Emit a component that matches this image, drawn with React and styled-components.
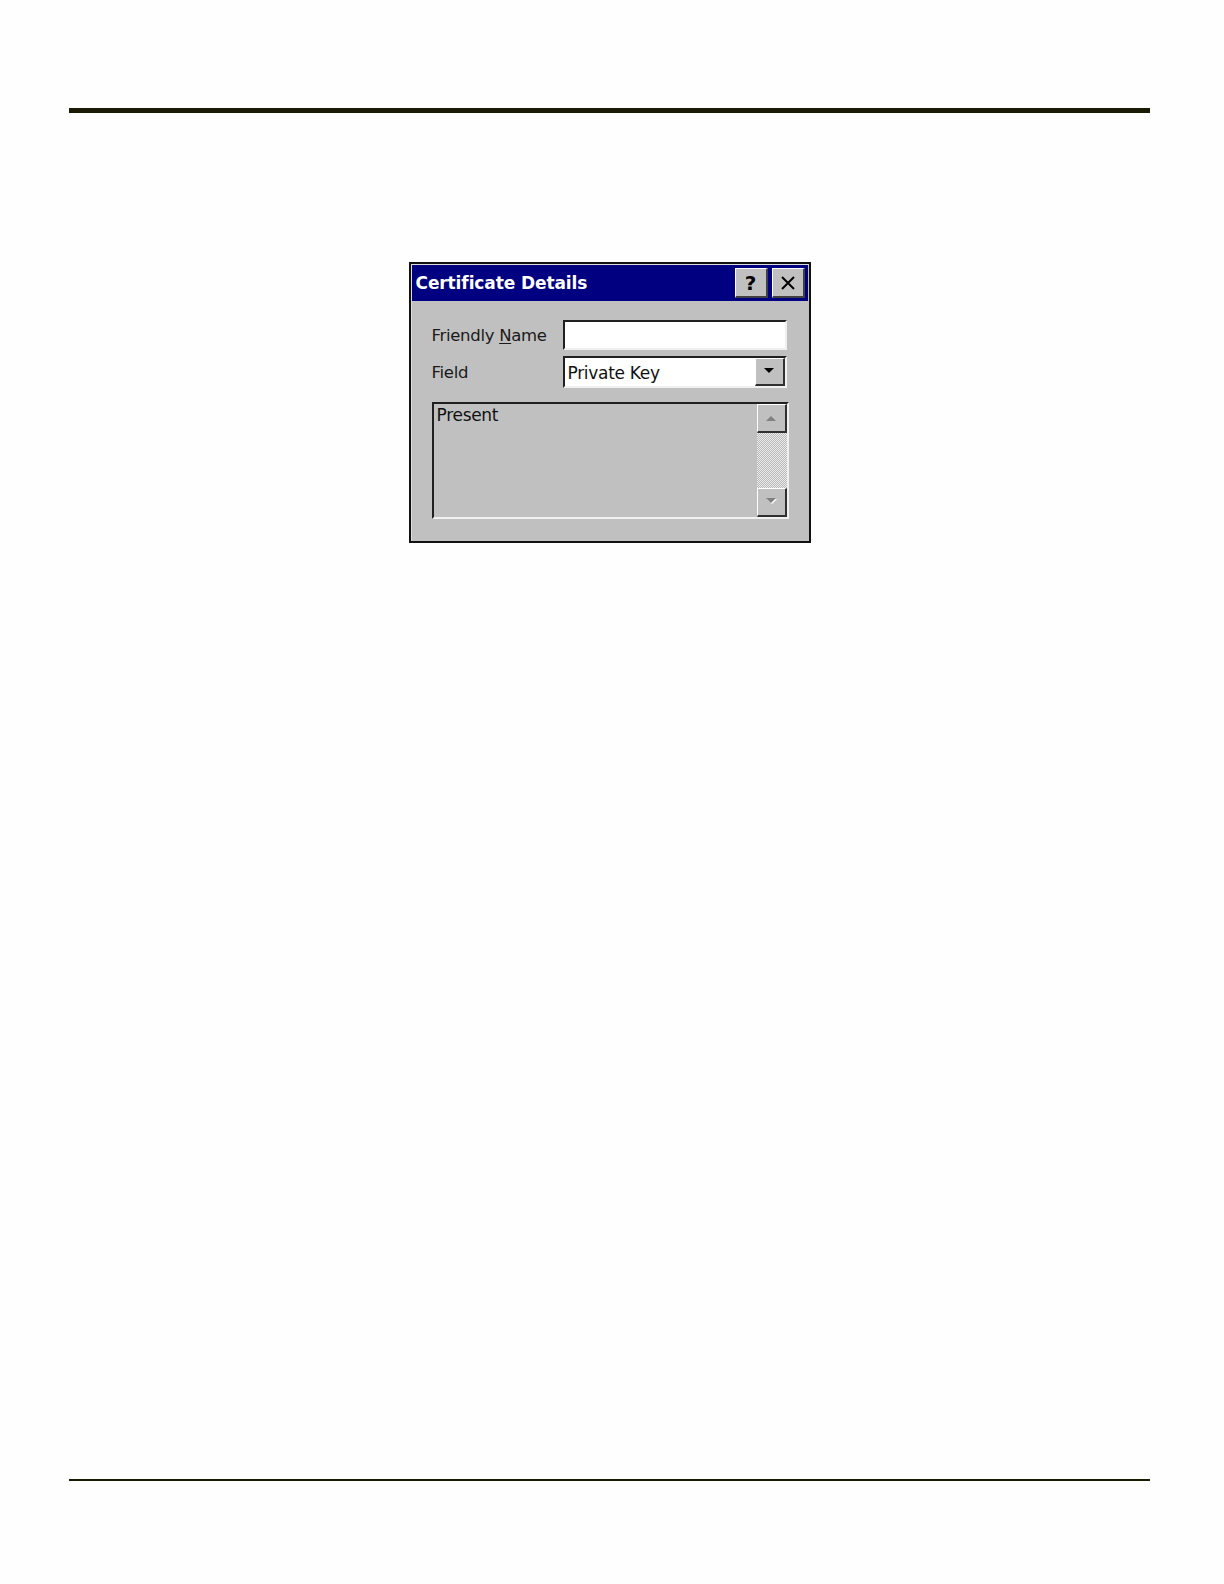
import React from 'react';
import styled, { createGlobalStyle } from 'styled-components';

const GlobalStyle = createGlobalStyle`
  html, body {
    margin: 0;
    padding: 0;
    background: #fefefe;
    overflow: hidden;
  }
`;

const Page = styled.div`
  width: 1224px;
  height: 1584px;
  display: flex;
  flex-direction: column;
  align-items: flex-start;
  padding-left: 69px;
  box-sizing: border-box;
  overflow: hidden;
`;

const Rule = styled.div`
  width: 1081px;
  height: ${(p) => p.thickness}px;
  flex-shrink: 0;
  background: #1a1a05;
  margin-top: ${(p) => p.top || 0};
  margin-bottom: ${(p) => p.bottom || 0};
`;

const Stage = styled.div`
  width: 1081px;
  display: flex;
  justify-content: center;
  padding-top: 149px;
`;

const Dialog = styled.div`
  width: 402px;
  height: 281px;
  box-sizing: border-box;
  border: 2px solid #111;
  background: #c0c0c0;
  padding: 1px;
  display: flex;
  flex-direction: column;
  font-family: 'DejaVu Sans', Tahoma, sans-serif;
  box-shadow: inset 1px 1px 0 #dcdcdc;
`;

const TitleBar = styled.div`
  height: 36px;
  background: #000080;
  display: flex;
  align-items: center;
  padding: 0 3px 0 4px;
  gap: 4px;
`;

const Title = styled.div`
  flex: 1;
  color: #fff;
  font-weight: bold;
  font-size: 17px;
  letter-spacing: -0.1px;
`;

const CaptionButton = styled.div`
  width: 33px;
  height: 30px;
  box-sizing: border-box;
  background: #c0c0c0;
  border-top: 1px solid #fff;
  border-left: 1px solid #fff;
  border-right: 2px solid #404040;
  border-bottom: 2px solid #404040;
  display: flex;
  align-items: center;
  justify-content: center;
  font-weight: bold;
  font-size: 20px;
  color: #000;
`;

const Body = styled.div`
  flex: 1;
  padding: 19px 20px 0 20px;
  display: flex;
  flex-direction: column;
`;

const Row = styled.div`
  display: flex;
  align-items: center;
  height: ${(p) => p.h}px;
  margin-bottom: ${(p) => p.mb || 0}px;
`;

const Label = styled.div`
  width: 131px;
  font-size: 16.5px;
  color: #1a1a1a;
  letter-spacing: -0.3px;
  u {
    text-decoration: underline;
    text-underline-offset: 2px;
  }
`;

const Sunken = styled.div`
  box-sizing: border-box;
  width: ${(p) => p.w}px;
  height: ${(p) => p.h}px;
  background: ${(p) => p.bg};
  border-top: 2px solid #202020;
  border-left: 2px solid #202020;
  border-right: 2px solid #f0f0f0;
  border-bottom: 2px solid #f0f0f0;
  display: flex;
  align-items: stretch;
`;

const ValueText = styled.div`
  flex: 1;
  font-size: 17px;
  color: #111;
  padding: 1px 0 0 3px;
  display: flex;
  align-items: ${(p) => (p.top ? 'flex-start' : 'center')};
  letter-spacing: -0.3px;
`;

const RaisedButton = styled.div`
  box-sizing: border-box;
  width: 30px;
  height: ${(p) => p.h}px;
  background: #c0c0c0;
  border-top: 1px solid #fff;
  border-left: 1px solid #fff;
  border-right: 2px solid #303030;
  border-bottom: 2px solid #303030;
  display: flex;
  align-items: center;
  justify-content: center;
`;

const ScrollBar = styled.div`
  width: 30px;
  display: flex;
  flex-direction: column;
`;

const Track = styled.div`
  flex: 1;
  background-color: #e0e0e0;
  background-image: repeating-conic-gradient(#b8b8b8 0 25%, #ececec 0 50%);
  background-size: 2px 2px;
`;

const Arrow = ({ dir, color = '#000', emboss }) => (
  <svg width="14" height="8" viewBox="0 0 14 8">
    {emboss && (
      <path d={dir === 'up' ? 'M3 8 L8 3 L13 8 Z' : 'M3 1 L13 1 L8 6 Z'} fill="#fff" />
    )}
    <path d={dir === 'up' ? 'M2 7 L7 2 L12 7 Z' : 'M2 0 L12 0 L7 5 Z'} fill={color} />
  </svg>
);

const CloseGlyph = () => (
  <svg width="14" height="14" viewBox="0 0 14 14">
    <path d="M1 1 L13 13 M13 1 L1 13" stroke="#000" strokeWidth="2" />
  </svg>
);

export default function App() {
  return (
    <>
      <GlobalStyle />
      <Page>
        <Rule thickness={5} top="108px" />
        <Stage>
          <Dialog>
            <TitleBar>
              <Title>Certificate Details</Title>
              <CaptionButton>?</CaptionButton>
              <CaptionButton>
                <CloseGlyph />
              </CaptionButton>
            </TitleBar>
            <Body>
              <Row h={30} mb={6}>
                <Label>
                  Friendly <u>N</u>ame
                </Label>
                <Sunken w={224} h={30} bg="#fff" />
              </Row>
              <Row h={32} mb={14}>
                <Label>Field</Label>
                <Sunken w={224} h={32} bg="#fff">
                  <ValueText>Private Key</ValueText>
                  <RaisedButton h={28}>
                    <Arrow dir="down" />
                  </RaisedButton>
                </Sunken>
              </Row>
              <Sunken w={357} h={117} bg="#c0c0c0">
                <ValueText top>Present</ValueText>
                <ScrollBar>
                  <RaisedButton h={29}>
                    <Arrow dir="up" color="#808080" />
                  </RaisedButton>
                  <Track />
                  <RaisedButton h={29}>
                    <Arrow dir="down" color="#808080" emboss />
                  </RaisedButton>
                </ScrollBar>
              </Sunken>
            </Body>
          </Dialog>
        </Stage>
        <Rule thickness={2} top="auto" bottom="103px" />
      </Page>
    </>
  );
}
